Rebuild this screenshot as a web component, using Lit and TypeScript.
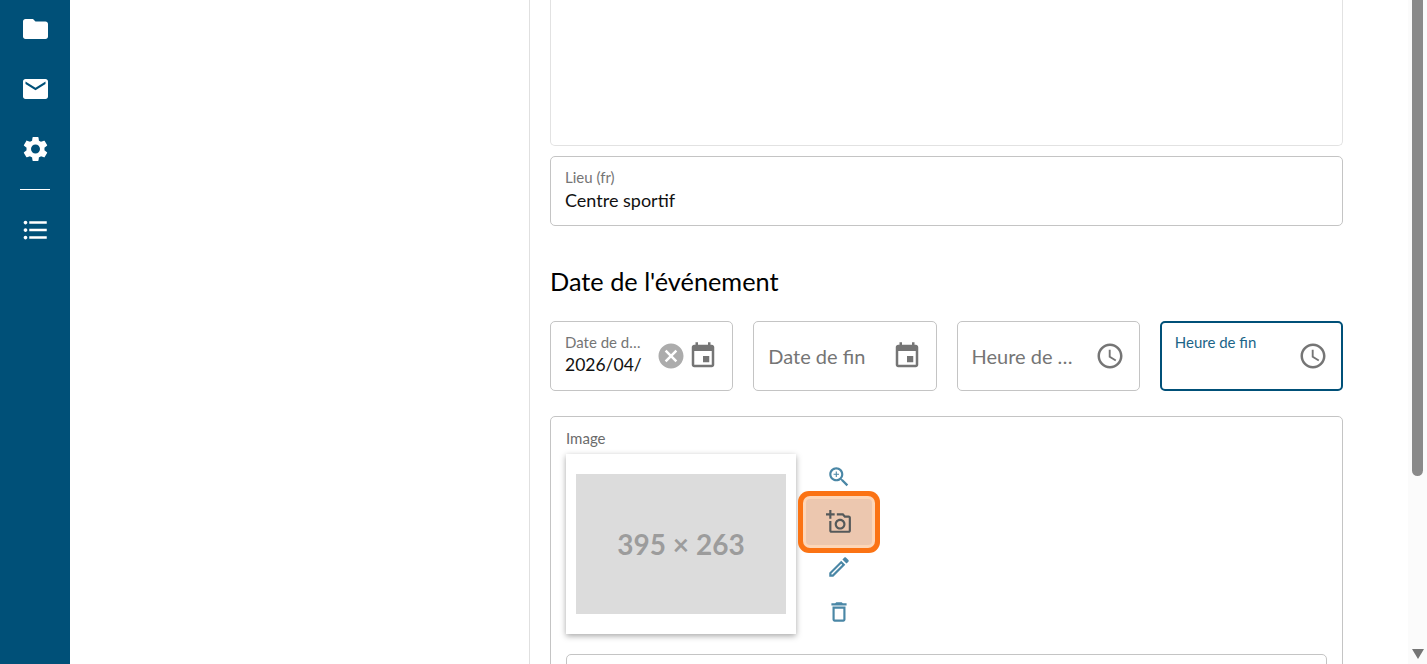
import { LitElement, html, css, svg } from 'lit';
import { customElement } from 'lit/decorators.js';

const ICONS = {
  folder: 'M10 4H4c-1.1 0-1.99.9-1.99 2L2 18c0 1.1.9 2 2 2h16c1.1 0 2-.9 2-2V8c0-1.1-.9-2-2-2h-8l-2-2z',
  email: 'M20 4H4c-1.1 0-1.99.9-1.99 2L2 18c0 1.1.9 2 2 2h16c1.1 0 2-.9 2-2V6c0-1.1-.9-2-2-2zm0 4l-8 5-8-5V6l8 5 8-5v2z',
  settings: 'M19.14 12.94c.04-.3.06-.61.06-.94 0-.32-.02-.64-.07-.94l2.03-1.58c.18-.14.23-.41.12-.61l-1.92-3.32c-.12-.22-.37-.29-.59-.22l-2.39.96c-.5-.38-1.03-.7-1.62-.94l-.36-2.54c-.04-.24-.24-.41-.48-.41h-3.84c-.24 0-.43.17-.47.41l-.36 2.54c-.59.24-1.13.57-1.62.94l-2.39-.96c-.22-.08-.47 0-.59.22L2.74 8.87c-.12.21-.08.47.12.61l2.03 1.58c-.05.3-.09.63-.09.94s.02.64.07.94l-2.03 1.58c-.18.14-.23.41-.12.61l1.92 3.32c.12.22.37.29.59.22l2.39-.96c.5.38 1.03.7 1.62.94l.36 2.54c.05.24.24.41.48.41h3.84c.24 0 .44-.17.47-.41l.36-2.54c.59-.24 1.13-.56 1.62-.94l2.39.96c.22.08.47 0 .59-.22l1.92-3.32c.12-.22.07-.47-.12-.61l-2.01-1.58zM12 15.6c-1.98 0-3.6-1.62-3.6-3.6s1.62-3.6 3.6-3.6 3.6 1.62 3.6 3.6-1.62 3.6-3.6 3.6z',
  list: 'M4 10.5c-.83 0-1.5.67-1.5 1.5s.67 1.5 1.5 1.5 1.5-.67 1.5-1.5-.67-1.5-1.5-1.5zm0-6c-.83 0-1.5.67-1.5 1.5S3.17 7.5 4 7.5 5.5 6.83 5.5 6 4.83 4.5 4 4.5zm0 12c-.83 0-1.5.68-1.5 1.5s.68 1.5 1.5 1.5 1.5-.68 1.5-1.5-.67-1.5-1.5-1.5zM7 19h14v-2H7v2zm0-6h14v-2H7v2zm0-8v2h14V5H7z',
  event: 'M17 12h-5v5h5v-5zM16 1v2H8V1H6v2H5c-1.11 0-1.99.9-1.99 2L3 19c0 1.1.89 2 2 2h14c1.1 0 2-.9 2-2V5c0-1.1-.9-2-2-2h-1V1h-2zm3 18H5V8h14v11z',
  schedule: 'M11.99 2C6.47 2 2 6.48 2 12s4.47 10 9.99 10C17.52 22 22 17.52 22 12S17.52 2 11.99 2zM12 20c-4.42 0-8-3.58-8-8s3.58-8 8-8 8 3.58 8 8-3.58 8-8 8zm.5-13H11v6l5.25 3.15.75-1.23-4.5-2.67z',
  cancel: 'M12 2C6.47 2 2 6.47 2 12s4.47 10 10 10 10-4.47 10-10S17.53 2 12 2zm5 13.59L15.59 17 12 13.41 8.41 17 7 15.59 10.59 12 7 8.41 8.41 7 12 10.59 15.59 7 17 8.41 13.41 12 17 15.59z',
  zoom: 'M15.5 14h-.79l-.28-.27C15.41 12.59 16 11.11 16 9.5 16 5.91 13.09 3 9.5 3S3 5.91 3 9.5 5.91 16 9.5 16c1.61 0 3.09-.59 4.23-1.57l.27.28v.79l5 4.99L20.49 19l-4.99-5zm-6 0C7.01 14 5 11.99 5 9.5S7.01 5 9.5 5 14 7.01 14 9.5 11.99 14 9.5 14zM12 10h-2v2H9v-2H7V9h2V7h1v2h2v1z',
  photo: 'M21 6h-3.17L16 4h-6v2h5.12l1.83 2H21v12H5v-9H3v9c0 1.1.9 2 2 2h16c1.1 0 2-.9 2-2V8c0-1.1-.9-2-2-2zM8 14c0 2.76 2.24 5 5 5s5-2.24 5-5-2.24-5-5-5-5 2.24-5 5zm5-3c1.65 0 3 1.35 3 3s-1.35 3-3 3-3-1.35-3-3 1.35-3 3-3zM5 6h3V4H5V1H3v3H0v2h3v3h2z',
  edit: 'M14.06 9.02l.92.92L5.92 19H5v-.92l9.06-9.06M17.66 3c-.25 0-.51.1-.7.29l-1.83 1.83 3.75 3.75 1.83-1.83c.39-.39.39-1.02 0-1.41l-2.34-2.34c-.2-.2-.45-.29-.71-.29zm-3.6 3.19L3 17.25V21h3.75L17.81 9.94l-3.75-3.75z',
  trash: 'M16 9v10H8V9h8m-1.5-6h-5l-1 1H5v2h14V4h-3.5l-1-1zM18 7H6v12c0 1.1.9 2 2 2h8c1.1 0 2-.9 2-2V7z',
};

const icon = (name: keyof typeof ICONS, cls = '') =>
  html`<svg class="icon ${cls}" viewBox="0 0 24 24" fill="currentColor">${svg`<path d=${ICONS[name]}></path>`}</svg>`;

@customElement('app-root')
export class AppRoot extends LitElement {
  static styles = css`
    :host {
      display: flex;
      height: 664px;
      overflow: hidden;
      font-family: Lato, 'Liberation Sans', sans-serif;
      color: #111;
      background: #fff;
    }

    .icon {
      display: block;
      width: 30px;
      height: 30px;
      flex: none;
    }

    /* sidebar */
    .sidebar {
      width: 70px;
      flex: none;
      background: #005078;
      color: #fff;
      display: flex;
      flex-direction: column;
      align-items: center;
      padding-top: 14px;
      box-sizing: border-box;
    }
    .sidebar .icon {
      width: 31px;
      height: 30px;
    }
    .sidebar .icon + .icon {
      margin-top: 30px;
    }
    .sidebar hr {
      width: 30px;
      height: 1px;
      border: 0;
      background: #fff;
      margin: 25px 0 25px;
    }

    .left {
      width: 459px;
      flex: none;
      border-right: 1px solid #e0e0e0;
    }

    .form {
      flex: 1;
      min-width: 0;
      padding: 0 65px 0 20px;
    }

    .text-area {
      height: 146px;
      box-sizing: border-box;
      border: 1px solid #e2e2e2;
      border-top: 0;
      border-radius: 0 0 5px 5px;
      margin-bottom: 10px;
    }

    .field {
      height: 70px;
      box-sizing: border-box;
      border: 1px solid #c4c4c4;
      border-radius: 5px;
      padding: 0 14px;
      display: flex;
      align-items: center;
      background: #fff;
      min-width: 0;
    }
    .field.focused {
      border: 2px solid #005078;
      padding: 0 13px;
    }
    .field .text {
      flex: 1;
      min-width: 0;
      margin-right: 12px;
      align-self: flex-start;
      padding-top: 10px;
    }
    .field .label {
      font-size: 15px;
      line-height: 20px;
      color: #757575;
      white-space: nowrap;
      overflow: hidden;
      text-overflow: ellipsis;
    }
    .field.focused .label {
      color: #1b6488;
      margin-top: -1px;
    }
    .field .value {
      font-size: 18px;
      line-height: 22px;
      margin-top: 2px;
      color: #111;
      white-space: nowrap;
      overflow: hidden;
    }
    .field .value.date {
      font-size: 17.5px;
    }
    .field .placeholder {
      font-size: 20px;
      line-height: 48px;
      color: #757575;
      white-space: nowrap;
      overflow: hidden;
      text-overflow: ellipsis;
    }
    .field .icon {
      color: #757575;
    }
    .field .icon.clear {
      color: #acacac;
      margin-right: 2px;
    }

    h2 {
      margin: 40px 0 25px;
      font-size: 25.3px;
      line-height: 30px;
      font-weight: 400;
      color: #000;
    }

    .dates {
      display: grid;
      grid-template-columns: repeat(4, minmax(0, 1fr));
      gap: 20px;
      margin-bottom: 25px;
    }

    .image-box {
      border: 1px solid #c4c4c4;
      border-radius: 5px;
      padding: 11px 15px 40px;
    }
    .image-box > .title {
      font-size: 15px;
      line-height: 20px;
      color: #6b6b6b;
      margin-bottom: 6px;
    }
    .image-row {
      display: flex;
      gap: 10px;
      margin-bottom: 20px;
    }
    .card {
      width: 230px;
      height: 180px;
      box-sizing: border-box;
      padding: 20px 10px;
      background: #fff;
      box-shadow: 0 2px 6px rgba(0, 0, 0, 0.35);
    }
    .placeholder-img {
      height: 140px;
      background: #dcdcdc;
      color: #9c9c9c;
      font-size: 28px;
      font-weight: 700;
      display: flex;
      align-items: center;
      justify-content: center;
    }
    .actions {
      display: flex;
      flex-direction: column;
      width: 66px;
    }
    .action {
      height: 45px;
      display: flex;
      align-items: center;
      justify-content: center;
      color: #4a87a6;
    }
    .action .icon {
      width: 26px;
      height: 26px;
    }
    .action.highlight {
      height: 46px;
      margin-bottom: -1px;
      color: #55595a;
      background: #ecc7af;
      border-radius: 4px;
      box-shadow: 0 0 0 3px #fdd6b8, 0 0 0 8px #fb7314;
    }
    .next-box {
      height: 60px;
      border: 1px solid #c4c4c4;
      border-radius: 5px;
    }

    /* scrollbar */
    .scrollbar {
      width: 19px;
      flex: none;
      background: #fbfbfb;
      display: flex;
      flex-direction: column;
      align-items: center;
      padding-bottom: 5px;
      box-sizing: border-box;
    }
    .thumb {
      width: 11px;
      height: 476px;
      background: #8a8a8a;
      border-radius: 0 0 6px 6px;
    }
    .arrow {
      margin-top: auto;
      width: 0;
      height: 0;
      border-left: 6.5px solid transparent;
      border-right: 6.5px solid transparent;
      border-top: 10px solid #757575;
    }
  `;

  render() {
    return html`
      <nav class="sidebar">
        ${icon('folder')} ${icon('email')} ${icon('settings')}
        <hr />
        ${icon('list')}
      </nav>
      <div class="left"></div>
      <main class="form">
        <div class="text-area"></div>
        <div class="field">
          <div class="text">
            <div class="label">Lieu (fr)</div>
            <div class="value">Centre sportif</div>
          </div>
        </div>

        <h2>Date de l'événement</h2>
        <div class="dates">
          <div class="field">
            <div class="text">
              <div class="label">Date de début</div>
              <div class="value date">2026/04/</div>
            </div>
            ${icon('cancel', 'clear')} ${icon('event')}
          </div>
          <div class="field">
            <div class="text"><div class="placeholder">Date de fin</div></div>
            ${icon('event')}
          </div>
          <div class="field">
            <div class="text"><div class="placeholder">Heure de début</div></div>
            ${icon('schedule')}
          </div>
          <div class="field focused">
            <div class="text"><div class="label">Heure de fin</div></div>
            ${icon('schedule')}
          </div>
        </div>

        <section class="image-box">
          <div class="title">Image</div>
          <div class="image-row">
            <div class="card"><div class="placeholder-img">395 × 263</div></div>
            <div class="actions">
              <div class="action">${icon('zoom')}</div>
              <div class="action highlight">${icon('photo')}</div>
              <div class="action">${icon('edit')}</div>
              <div class="action">${icon('trash')}</div>
            </div>
          </div>
          <div class="next-box"></div>
        </section>
      </main>
      <div class="scrollbar">
        <div class="thumb"></div>
        <div class="arrow"></div>
      </div>
    `;
  }
}
